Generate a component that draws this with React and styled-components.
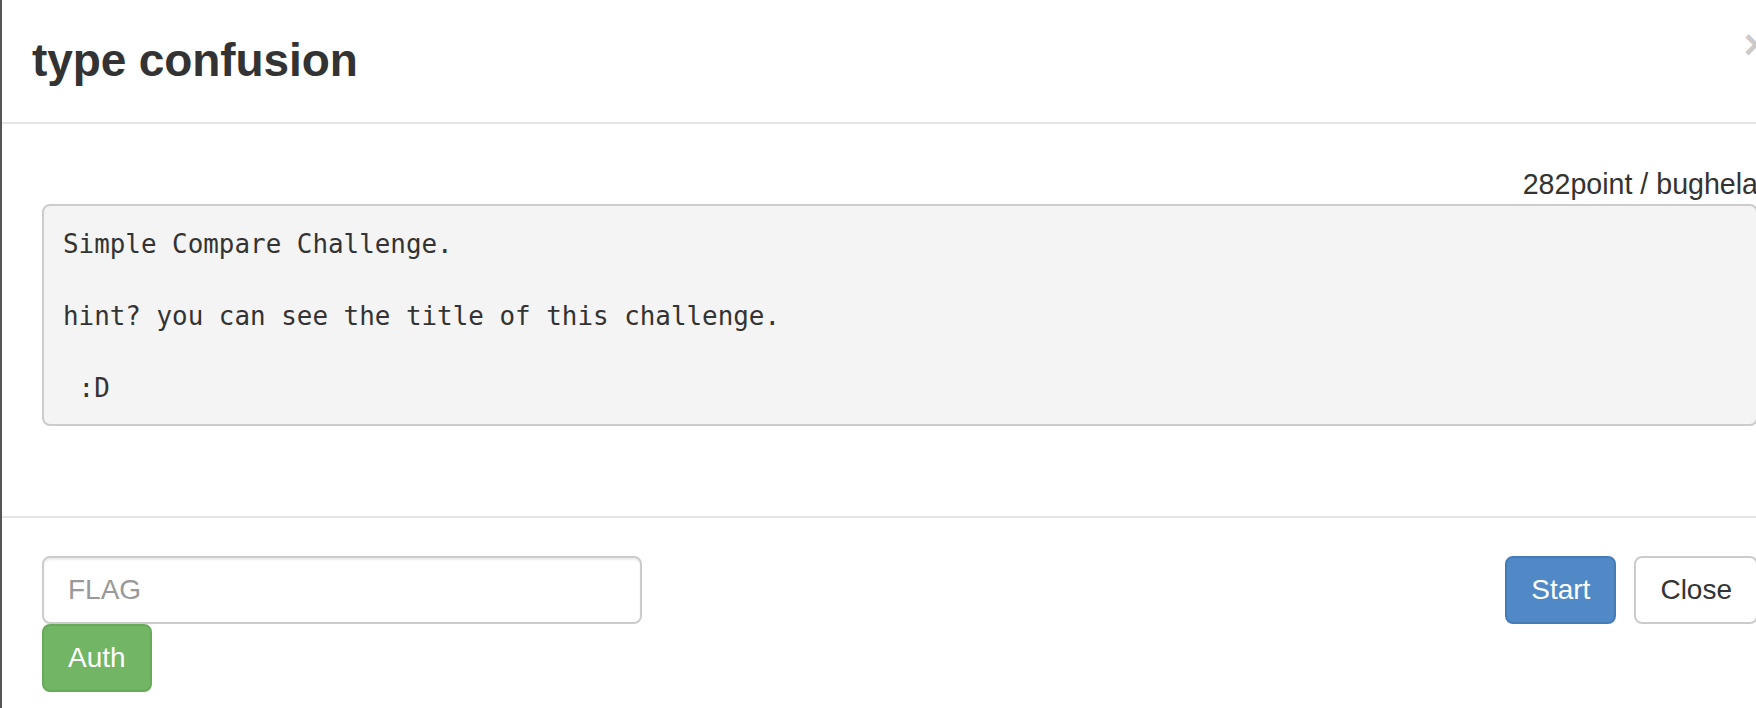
import React from "react";
import styled, { createGlobalStyle } from "styled-components";

const GlobalStyle = createGlobalStyle`
  html, body {
    margin: 0;
    padding: 0;
    background: #ffffff;
    overflow: hidden;
  }
  body {
    font-family: "Liberation Sans", Arial, Helvetica, sans-serif;
    color: #333333;
  }
  * { box-sizing: border-box; }
`;

const Modal = styled.div`
  width: 1798px;
  background: #ffffff;
  border-left: 2px solid #555555;
`;

const Header = styled.div`
  display: flex;
  justify-content: space-between;
  align-items: flex-start;
  padding: 28px 30px 30px 30px;
  border-bottom: 2px solid #e5e5e5;
`;

const Title = styled.h3`
  margin: 0;
  font-size: 46px;
  line-height: 64px;
  font-weight: 700;
  color: #333333;
  letter-spacing: -0.1px;
`;

const CloseX = styled.button`
  margin-top: -4px;
  padding: 0;
  border: 0;
  background: none;
  font-family: "Liberation Sans", Arial, sans-serif;
  font-size: 42px;
  font-weight: 700;
  line-height: 1;
  color: #000000;
  opacity: 0.2;
  cursor: pointer;
`;

const Body = styled.div`
  padding: 40px;
`;

const Meta = styled.div`
  text-align: right;
  font-size: 28.6px;
  line-height: 40px;
  color: #333333;
`;

const Pre = styled.pre`
  margin: 0 0 20px 0;
  padding: 20px 19px 18px 19px;
  background: #f4f4f4;
  border: 2px solid #cccccc;
  border-radius: 8px;
  font-family: "DejaVu Sans Mono", Menlo, monospace;
  font-size: 25.9px;
  line-height: 36px;
  color: #333333;
  white-space: pre-wrap;
`;

const Footer = styled.div`
  display: flex;
  justify-content: space-between;
  align-items: flex-start;
  margin-top: 30px;
  padding: 38px 40px 40px 40px;
  border-top: 2px solid #e5e5e5;
`;

const AuthForm = styled.form`
  display: flex;
  flex-direction: column;
  align-items: flex-start;
  width: 600px;
`;

const FlagInput = styled.input`
  width: 600px;
  height: 68px;
  padding: 12px 24px;
  font-family: "Liberation Sans", Arial, sans-serif;
  font-size: 28px;
  color: #555555;
  background: #ffffff;
  border: 2px solid #cccccc;
  border-radius: 8px;
  box-shadow: inset 0 2px 2px rgba(0, 0, 0, 0.075);
  outline: none;
  &::placeholder {
    color: #999999;
  }
`;

const variants = {
  success: { bg: "#72b565", border: "#66aa5a", color: "#ffffff" },
  primary: { bg: "#5089c6", border: "#437cb9", color: "#ffffff" },
  default: { bg: "#ffffff", border: "#cccccc", color: "#333333" },
};

const Button = styled.button`
  display: inline-block;
  padding: 12px 24px;
  font-family: "Liberation Sans", Arial, sans-serif;
  font-size: 28px;
  line-height: 40px;
  font-weight: 400;
  border-radius: 8px;
  border: 2px solid ${(p) => variants[p.$variant].border};
  background: ${(p) => variants[p.$variant].bg};
  color: ${(p) => variants[p.$variant].color};
  cursor: pointer;
  white-space: nowrap;
`;

const Actions = styled.div`
  display: flex;
  gap: 18px;
`;

export default function App() {
  return (
    <>
      <GlobalStyle />
      <Modal>
        <Header>
          <Title>type confusion</Title>
          <CloseX type="button">×</CloseX>
        </Header>
        <Body>
          <Meta>282point / bughela</Meta>
          <Pre>{"Simple Compare Challenge.\n\nhint? you can see the title of this challenge.\n\n :D"}</Pre>
        </Body>
        <Footer>
          <AuthForm onSubmit={(e) => e.preventDefault()}>
            <FlagInput type="text" placeholder="FLAG" />
            <Button $variant="success" type="submit">Auth</Button>
          </AuthForm>
          <Actions>
            <Button $variant="primary" type="button">Start</Button>
            <Button $variant="default" type="button">Close</Button>
          </Actions>
        </Footer>
      </Modal>
    </>
  );
}
